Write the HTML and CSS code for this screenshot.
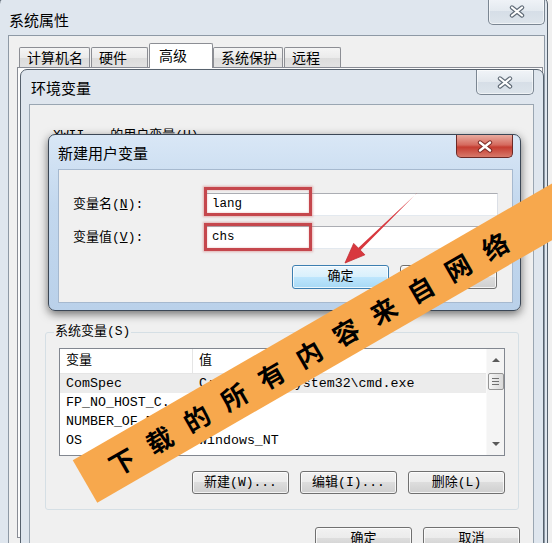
FILE: index.html
```html
<!DOCTYPE html>
<html lang="zh-CN">
<head>
<meta charset="utf-8">
<title>系统属性</title>
<link rel="stylesheet" href="styles.css">
</head>
<body>
<div class="outer">
  <div class="tbar">
    <span class="ttl">系统属性</span>
    <div class="xbtn"><svg width="16" height="13" viewBox="0 0 16 13"><path d="M3 2.5 L13 10.5 M13 2.5 L3 10.5" stroke="#5f6a76" stroke-width="4.4" stroke-linecap="round"/><path d="M3 2.5 L13 10.5 M13 2.5 L3 10.5" stroke="#fff" stroke-width="2.2" stroke-linecap="round"/></svg></div>
  </div>
  <div class="oclient">
    <div class="tabs">
      <div class="tab t1">计算机名</div>
      <div class="tab t2">硬件</div>
      <div class="tab sel">高级</div>
      <div class="tab t4">系统保护</div>
      <div class="tab t5">远程</div>
    </div>
    <div class="tabpage"></div>
  </div>
</div>

<div class="env">
  <div class="tbar">
    <span class="ttl">环境变量</span>
    <div class="xbtn"><svg width="16" height="13" viewBox="0 0 16 13"><path d="M3 2.5 L13 10.5 M13 2.5 L3 10.5" stroke="#5f6a76" stroke-width="4.4" stroke-linecap="round"/><path d="M3 2.5 L13 10.5 M13 2.5 L3 10.5" stroke="#fff" stroke-width="2.2" stroke-linecap="round"/></svg></div>
  </div>
  <div class="eclient">
    <div class="uvlabel"><span>XWII</span><span class="uvtext">的用户变量(U)</span></div>
    <div class="uvspace"></div>
    <fieldset class="grp">
      <legend>系统变量(S)</legend>
      <div class="list">
        <div class="lmain">
          <div class="lhead"><div class="c1">变量</div><div class="c2">值</div></div>
          <div class="lrow hl"><div class="c1">ComSpec</div><div class="c2">C:\Windows\system32\cmd.exe</div></div>
          <div class="lrow"><div class="c1">FP_NO_HOST_C.</div><div class="c2">NO</div></div>
          <div class="lrow"><div class="c1">NUMBER_OF_P.</div><div class="c2">2</div></div>
          <div class="lrow"><div class="c1">OS</div><div class="c2">Windows_NT</div></div>
        </div>
        <div class="sbar">
          <div class="sarr"><i class="up"></i></div>
          <div class="thumb"><b></b><b></b><b></b></div>
          <div class="strack"></div>
          <div class="sarr"><i class="down"></i></div>
        </div>
      </div>
      <div class="brow">
        <div class="btn">新建(W)...</div>
        <div class="btn">编辑(I)...</div>
        <div class="btn">删除(L)</div>
      </div>
    </fieldset>
    <div class="brow bottom">
      <div class="btn">确定</div>
      <div class="btn">取消</div>
    </div>
  </div>
</div>

<div class="dlg">
  <div class="tbar">
    <span class="ttl">新建用户变量</span>
    <div class="rx"><svg width="16" height="13" viewBox="0 0 16 13"><path d="M3 2.5 L13 10.5 M13 2.5 L3 10.5" stroke="#7a2a25" stroke-width="4.4" stroke-linecap="round"/><path d="M3 2.5 L13 10.5 M13 2.5 L3 10.5" stroke="#fff" stroke-width="2.4" stroke-linecap="round"/></svg></div>
  </div>
  <div class="dclient">
    <div class="form">
      <div class="lbl">变量名(<u>N</u>):</div>
      <div class="inp">lang</div>
      <div class="lbl">变量值(<u>V</u>):</div>
      <div class="inp">chs</div>
    </div>
    <div class="dbtns">
      <div class="btn def">确定</div>
      <div class="btn">取消</div>
    </div>
  </div>
  <div class="hlbox hb1"></div>
  <div class="hlbox hb2"></div>
</div>

<svg class="arrow" width="552" height="543" viewBox="0 0 552 543">
  <polygon points="417.4,192.6 416.6,193.4 358.2,248.0 360.4,250.2" fill="#d8383e"/>
  <polygon points="345,263 353.7,243.4 364.9,254.8" fill="#d8383e" stroke="#c22f35" stroke-width="0.8"/>
</svg>

<div class="banner">
  <span>下</span><span>载</span><span>的</span><span>所</span><span>有</span><span>内</span><span>容</span><span>来</span><span>自</span><span>网</span><span>络</span>
</div>
</body>
</html>
```

FILE: styles.css
```css
* { box-sizing: border-box; }
html, body { margin: 0; padding: 0; }
body {
  width: 552px;
  height: 543px;
  overflow: hidden;
  position: relative;
  background: #f0f0f0;
  font-family: "Liberation Mono", "Noto Sans CJK SC", monospace;
  font-size: 13px;
  color: #000;
}

/* ---------- common window parts ---------- */
.tbar {
  display: flex;
  justify-content: space-between;
  align-items: flex-start;
  flex: none;
}
.ttl {
  font-family: "Noto Sans CJK SC", sans-serif;
  font-size: 15px;
  line-height: 18px;
  color: #000;
}
.xbtn {
  width: 57px;
  height: 27px;
  border: 1px solid #7b8692;
  border-top: none;
  border-radius: 0 0 5px 5px;
  background: linear-gradient(#f1f4f8, #e3e9ef 50%, #d6dee7 51%, #dde4eb);
  box-shadow: inset 0 0 0 1px rgba(255,255,255,.55);
  display: flex;
  align-items: center;
  justify-content: center;
}

/* ---------- outer window ---------- */
.outer {
  margin: -3px 0 0 -1px;
  width: 549px;
  height: 560px;
  border: 1px solid #56616d;
  border-radius: 7px 7px 0 0;
  background: #dfe6ee;
  display: flex;
  flex-direction: column;
}
.outer > .tbar { height: 37px; padding: 0 2px 0 9px; }
.outer .ttl { margin-top: 13px; }
.oclient {
  flex: 1;
  margin: 0 2px 0 8px;
  border: 1px solid #8e99a5;
  background: #f0f0f0;
  display: flex;
  flex-direction: column;
}
.tabs {
  display: flex;
  align-items: flex-end;
  height: 31px;
  padding-left: 10px;
  flex: none;
}
.tab {
  height: 20px;
  border: 1px solid #8c8e94;
  border-bottom: none;
  border-radius: 2px 2px 0 0;
  background: linear-gradient(#f5f5f5, #ebebeb 50%, #dcdcdc 51%, #e2e2e2);
  font-family: "Noto Sans CJK SC", sans-serif;
  font-size: 14px;
  line-height: 18px;
  padding-left: 7px;
  margin-right: 1px;
  white-space: nowrap;
}
.t1 { width: 71px; }
.t2 { width: 57px; }
.sel {
  width: 64px;
  height: 25px;
  margin-bottom: -1px;
  margin-right: 0;
  background: #fff;
  padding-left: 9px;
  line-height: 22px;
  position: relative;
  z-index: 1;
}
.t4 { width: 70px; }
.t5 { width: 57px; }
.tabpage {
  height: 471px;
  margin: 0 1px 0 8px;
  border: 1px solid #898c95;
  background: #fcfcfc;
}

/* ---------- 环境变量 window ---------- */
.env {
  position: absolute;
  left: 20px;
  top: 69px;
  width: 524px;
  height: 490px;
  border: 1px solid #56616d;
  border-radius: 7px 7px 0 0;
  background: #dfe6ee;
  display: flex;
  flex-direction: column;
}
.env > .tbar { height: 34px; padding: 0 9px 0 10px; }
.env .ttl { margin-top: 9px; }
.env .xbtn { height: 25px; width: 58px; }
.eclient {
  flex: 1;
  margin: 0 9px 0 8px;
  border: 1px solid #9aa6b2;
  background: #f0f0f0;
  padding: 22px 14px 0 15px;
  display: flex;
  flex-direction: column;
}
.uvlabel {
  height: 18px;
  line-height: 18px;
  margin-left: 8px;
  white-space: nowrap;
}
.uvtext { margin-left: 26px; }
.uvspace { height: 178px; flex: none; }

.grp {
  margin: 0;
  min-width: 0;
  padding: 7px 13px 15px 13px;
  border: 1px solid #d5dfe5;
  border-radius: 3px;
}
.grp legend {
  padding: 0 1px;
  margin-left: -5px;
  line-height: 18px;
  font-size: 13px;
}
.list {
  height: 108px;
  border: 1px solid #828790;
  background: #fff;
  display: flex;
}
.lmain { flex: 1; min-width: 0; }
.lhead {
  display: flex;
  height: 25px;
  line-height: 24px;
  border-bottom: 1px solid #e5e5e5;
}
.lhead .c1 { border-right: 1px solid #e5e5e5; }
.c1 {
  width: 133px;
  flex: none;
  padding-left: 6px;
  overflow: hidden;
  white-space: nowrap;
}
.c2 {
  flex: 1;
  padding-left: 6px;
  overflow: hidden;
  white-space: nowrap;
}
.lrow {
  display: flex;
  height: 19px;
  line-height: 19px;
  font-size: 13.3px;
}
.lrow.hl { background: #ececec; }

.sbar {
  width: 18px;
  flex: none;
  background: #f4f4f4;
  border-left: 1px solid #f9f9f9;
  display: flex;
  flex-direction: column;
  align-items: center;
}
.sarr {
  height: 22px;
  width: 100%;
  display: flex;
  align-items: center;
  justify-content: center;
}
.sarr i {
  width: 0;
  height: 0;
  border-left: 4px solid transparent;
  border-right: 4px solid transparent;
}
.sarr .up { border-bottom: 4px solid #5a5a5a; }
.sarr .down { border-top: 4px solid #5a5a5a; }
.thumb {
  margin-top: 2px;
  width: 16px;
  height: 17px;
  border: 1px solid #959595;
  border-radius: 2px;
  background: linear-gradient(90deg, #f6f6f6, #e6e6e6 50%, #dadada);
  display: flex;
  flex-direction: column;
  align-items: center;
  justify-content: center;
  gap: 2px;
}
.thumb b {
  display: block;
  width: 7px;
  height: 1px;
  background: #6f6f6f;
}
.strack { flex: 1; }

.brow {
  display: flex;
  justify-content: flex-end;
  gap: 11px;
  margin-top: 15px;
}
.brow.bottom { margin-top: 17px; margin-right: -1px; }
.btn {
  width: 97px;
  height: 23px;
  border: 1px solid #707070;
  border-radius: 3px;
  background: linear-gradient(#f2f2f2 0%, #ebebeb 49%, #dddddd 50%, #cfcfcf 100%);
  box-shadow: inset 0 0 0 1px rgba(255,255,255,.75);
  text-align: center;
  line-height: 21px;
  font-size: 13px;
  white-space: nowrap;
}

/* ---------- 新建用户变量 dialog ---------- */
.dlg {
  position: absolute;
  left: 48px;
  top: 134px;
  width: 473px;
  height: 177px;
  border: 1px solid #3b4756;
  border-radius: 7px;
  background: linear-gradient(#d9e7f6, #c3d8ee 40%, #bad1ea);
  box-shadow: 0 3px 10px rgba(0,0,0,.55);
  display: flex;
  flex-direction: column;
}
.dlg > .tbar { height: 34px; padding: 0 7px 0 9px; }
.dlg .ttl { margin-top: 9px; }
.rx {
  width: 57px;
  height: 23px;
  border: 1px solid #6b2a27;
  border-top: none;
  border-radius: 0 0 5px 5px;
  background: linear-gradient(#e9ab9f, #d56a5e 45%, #c53d31 55%, #d7796a);
  display: flex;
  align-items: center;
  justify-content: center;
}
.dclient {
  flex: 1;
  margin: 0 7px 7px 9px;
  border: 1px solid #a6b9cf;
  background: #f0f0f0;
  padding: 23px 14px 0 14px;
}
.form {
  display: grid;
  grid-template-columns: 132px 1fr;
  row-gap: 10px;
}
.lbl {
  line-height: 23px;
  font-size: 13px;
  white-space: nowrap;
}
.inp {
  height: 23px;
  border: 1px solid #abadb3;
  border-color: #abadb3 #dbdfe6 #e3e9ef #e2e3ea;
  background: #fff;
  padding-left: 6px;
  line-height: 21px;
  font-size: 12.5px;
}
.dbtns {
  display: flex;
  justify-content: flex-end;
  gap: 11px;
  margin-top: 16px;
  margin-right: 1px;
}
.dbtns .btn { height: 24px; line-height: 22px; }
.btn.def {
  border-color: #3c7fb1;
  background: linear-gradient(#eaf6fd, #d9f0fc 49%, #bee6fd 50%, #a7d9f5);
}
.hlbox {
  position: absolute;
  left: 155px;
  width: 108px;
  border: 3px solid #c5474d;
  box-shadow: 0 0 2px 1px rgba(215,130,130,.55), inset 0 0 2px rgba(200,80,80,.45);
}
.hb1 { top: 52px; height: 29px; }
.hb2 { top: 88px; height: 28px; }

/* ---------- overlays ---------- */
.arrow {
  position: absolute;
  left: 0;
  top: 0;
  pointer-events: none;
}
.banner {
  position: absolute;
  left: 85px;
  top: 456.5px;
  width: 720px;
  height: 49px;
  transform-origin: 0 50%;
  transform: rotate(-30deg);
  background: #f7a84d;
  display: flex;
  align-items: center;
  padding-left: 20.5px;
  font-family: "Noto Sans CJK SC", sans-serif;
  font-weight: 700;
  font-size: 26px;
  color: #000;
}
.banner span {
  width: 43.1px;
  flex: none;
  text-align: center;
  line-height: 1;
}
```
